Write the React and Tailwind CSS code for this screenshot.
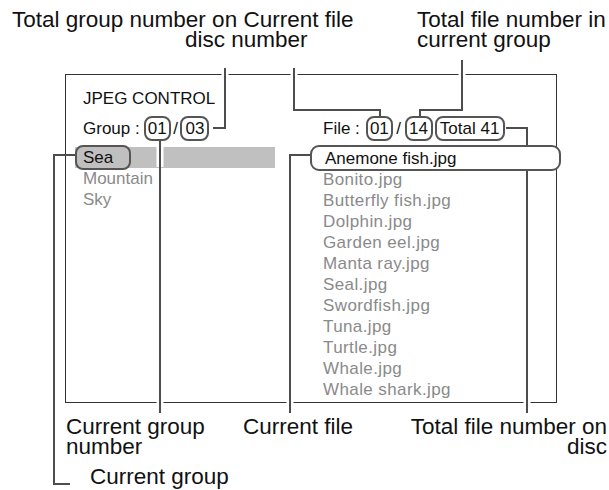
const files = [
  'Bonito.jpg',
  'Butterfly fish.jpg',
  'Dolphin.jpg',
  'Garden eel.jpg',
  'Manta ray.jpg',
  'Seal.jpg',
  'Swordfish.jpg',
  'Tuna.jpg',
  'Turtle.jpg',
  'Whale.jpg',
  'Whale shark.jpg',
];

function NumBox({ children, className = 'w-[27px]' }) {
  return (
    <span
      className={`inline-flex h-[25px] items-center justify-center rounded-[8px] border-2 border-[#555] leading-none ${className}`}
    >
      {children}
    </span>
  );
}

// leader lines drawn over the screen, with a white knock-out where they cross
function Leaders() {
  const knock = [
    [225, 70, 225, 78],
    [294, 70, 294, 78],
    [462, 70, 462, 78],
    [160, 144, 160, 167],
    [160, 398, 160, 406],
    [290, 398, 290, 406],
    [527, 398, 527, 406],
    [527, 139, 527, 145],
    [527, 165, 527, 171],
  ];
  const paths = [
    'M213 128 H225 V68',
    'M294 68 V110 H380 V116',
    'M462 60 V110 H420 V116',
    'M506 128 H527 V413',
    'M310 155 H290 V413',
    'M160 141 V413',
    'M75 155 H54 V484 H70',
  ];
  return (
    <svg className="pointer-events-none absolute inset-0" width="609" height="490">
      {knock.map(([x1, y1, x2, y2], i) => (
        <line key={i} x1={x1} y1={y1} x2={x2} y2={y2} stroke="#fff" strokeWidth="7" />
      ))}
      {paths.map((d, i) => (
        <path key={i} d={d} fill="none" stroke="#4d4d4d" strokeWidth="2" />
      ))}
    </svg>
  );
}

export default function App() {
  return (
    <div
      className="relative h-[490px] w-[609px] overflow-hidden bg-white text-[#111]"
      style={{ fontFamily: '"Liberation Sans", Arial, sans-serif' }}
    >
      <div className="pl-[65px] pt-[74px]">
        <div className="h-[329px] w-[492px] border border-[#333] pl-[17px] pt-[13px] text-[17px] leading-[21px]">
          <div>JPEG CONTROL</div>

          <div className="mt-[7px] grid grid-cols-[240px_1fr]">
            <div className="flex items-center">
              <span className="mr-[4px]">Group :</span>
              <NumBox>01</NumBox>
              <span className="mx-[2.5px]">/</span>
              <NumBox className="w-[29px]">03</NumBox>
            </div>
            <div className="flex items-center">
              <span className="mr-[6px]">File :</span>
              <NumBox>01</NumBox>
              <span className="mx-[3.5px]">/</span>
              <NumBox className="w-[28px]">14</NumBox>
              <NumBox className="ml-[2px] w-[70px]">Total 41</NumBox>
            </div>
          </div>

          <div className="mt-[6px] grid grid-cols-[240px_1fr]">
            <div>
              <div className="ml-[-8px] flex h-[21px] w-[200px] items-center bg-[#c0c0c0]">
                <span className="flex h-[25px] items-center rounded-[8px] border-2 border-[#555] pl-[6px] pr-[16px]">
                  Sea
                </span>
              </div>
              <div className="text-[#8a8a8a]">Mountain</div>
              <div className="text-[#8a8a8a]">Sky</div>
            </div>
            <div>
              <div className="relative z-10 ml-[-13px] mr-[-5px] -my-[2px] flex h-[26px] items-center rounded-[9px] border-2 border-[#555] bg-white pl-[13px]">
                Anemone fish.jpg
              </div>
              {files.map((f) => (
                <div key={f} className="tracking-[0.4px] text-[#8a8a8a]">
                  {f}
                </div>
              ))}
            </div>
          </div>
        </div>
      </div>

      <Leaders />

      <div className="absolute left-[12px] top-[10px] text-[22.5px] leading-[20px]">
        <div>Total group number on Current file</div>
        <div className="ml-[173px]">disc number</div>
      </div>
      <div className="absolute left-[417px] top-[10px] text-[22.5px] leading-[20px]">
        <div>Total file number in</div>
        <div>current group</div>
      </div>

      <div className="absolute left-[66px] top-[417px] text-[22.5px] leading-[20px]">
        <div>Current group</div>
        <div>number</div>
      </div>
      <div className="absolute left-[243px] top-[417px] text-[22.5px] leading-[20px]">Current file</div>
      <div className="absolute right-[2px] top-[417px] text-right text-[22.5px] leading-[20px]">
        <div>Total file number on</div>
        <div>disc</div>
      </div>
      <div className="absolute left-[90px] top-[467px] text-[22.5px] leading-[20px]">Current group</div>
    </div>
  );
}
